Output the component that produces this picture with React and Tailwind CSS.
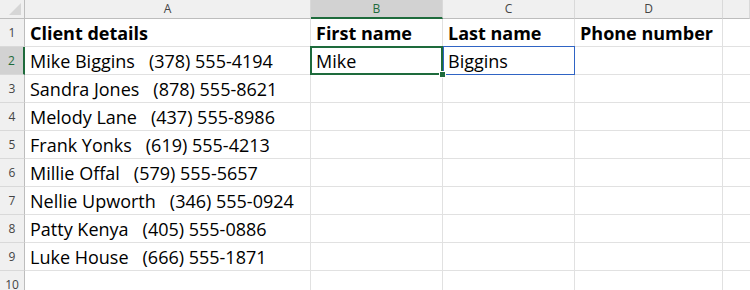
import React from 'react';

const rows = [
  ['Client details', 'First name', 'Last name', 'Phone number'],
  ['Mike Biggins   (378) 555-4194', 'Mike', 'Biggins', ''],
  ['Sandra Jones   (878) 555-8621', '', '', ''],
  ['Melody Lane   (437) 555-8986', '', '', ''],
  ['Frank Yonks   (619) 555-4213', '', '', ''],
  ['Millie Offal   (579) 555-5657', '', '', ''],
  ['Nellie Upworth   (346) 555-0924', '', '', ''],
  ['Patty Kenya   (405) 555-0886', '', '', ''],
  ['Luke House   (666) 555-1871', '', '', ''],
  ['', '', '', ''],
];

const cols = ['A', 'B', 'C', 'D', ''];

export default function App() {
  return (
    <div
      className="w-[750px] h-[290px] overflow-hidden bg-white text-black"
      style={{ fontFamily: '"Open Sans", "Noto Sans", sans-serif' }}
    >
      <div className="grid grid-cols-[25px_286px_132px_132px_148px_1fr] grid-rows-[19px_repeat(10,28px)]">
        {/* corner */}
        <div className="relative bg-[#f0f0f0] border-r border-b border-[#bdbdbd]">
          <div className="absolute right-[3px] bottom-[3px] w-0 h-0 border-l-[12px] border-l-transparent border-b-[12px] border-b-[#d6d6d6]" />
        </div>
        {cols.map((c, i) => (
          <div
            key={'h' + i}
            className={
              c === 'B'
                ? 'flex items-center justify-center bg-[#d2d2d2] border-r border-[#d9d9d9] border-b-2 border-b-[#1e6b3c] text-[12px] text-[#1e6b3c]'
                : 'flex items-center justify-center bg-[#f0f0f0] border-r border-[#d9d9d9] border-b border-b-[#bdbdbd] text-[12px] text-[#444]'
            }
          >
            {c}
          </div>
        ))}

        {rows.map((r, ri) => (
          <React.Fragment key={ri}>
            <div
              className={
                ri === 1
                  ? 'flex items-center justify-center bg-[#d2d2d2] border-b border-[#d9d9d9] border-r-2 border-r-[#1e6b3c] text-[12px] text-[#1e6b3c]'
                  : 'flex items-center justify-center bg-[#f0f0f0] border-b border-[#d9d9d9] border-r border-r-[#bdbdbd] text-[12px] text-[#444]'
              }
            >
              {ri + 1}
            </div>
            {r.map((v, ci) => (
              <div
                key={ci}
                className={
                  'relative flex items-end pl-[5px] pb-[1px] border-r border-b border-[#e1e1e1] whitespace-pre text-[18px] leading-[24px] ' +
                  (ri === 0 ? 'font-bold' : '')
                }
              >
                {v}
                {ri === 1 && ci === 1 && (
                  <>
                    <div className="absolute -left-px -top-px -right-px -bottom-px border-2 border-[#1e6b3c]" />
                    <div className="absolute -right-[4px] -bottom-[4px] w-[7px] h-[7px] bg-[#1e6b3c] border border-white z-10" />
                  </>
                )}
                {ri === 1 && ci === 2 && (
                  <div className="absolute left-0 -top-px -right-px -bottom-px border border-[#2f64c4]" />
                )}
              </div>
            ))}
            <div className="border-b border-[#e1e1e1]" />
          </React.Fragment>
        ))}
      </div>
    </div>
  );
}
